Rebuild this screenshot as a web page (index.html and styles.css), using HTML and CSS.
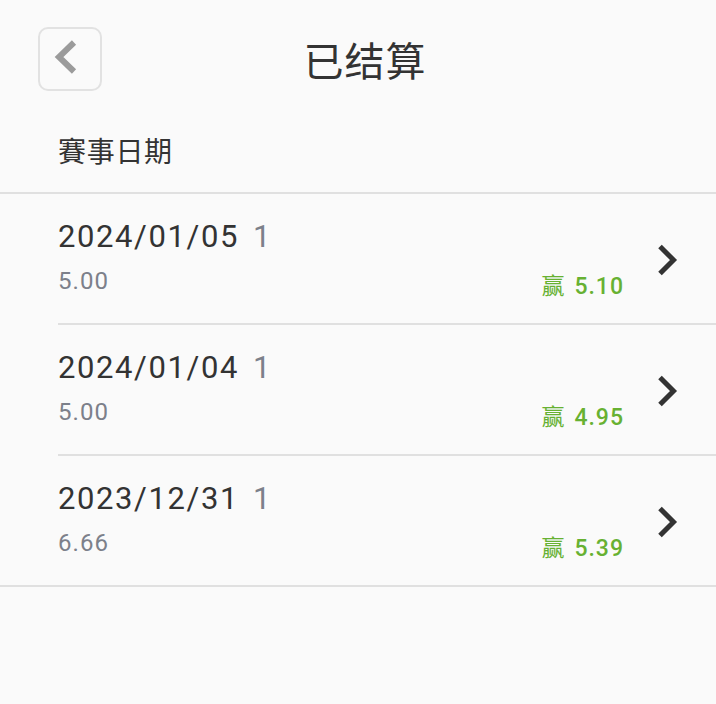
FILE: index.html
```html
<!DOCTYPE html>
<html lang="zh">
<head>
<meta charset="utf-8">
<title>已结算</title>
<link rel="stylesheet" href="styles.css">
</head>
<body>
<div class="page">
  <header class="topbar">
    <button class="back" aria-label="返回">
      <svg class="back-icon" width="30" height="40" viewBox="0 0 30 40"><polyline points="21,4.5 6,19 21,33.5" fill="none" stroke="#9b9b9b" stroke-width="6" stroke-linejoin="miter"/></svg>
    </button>
    <h1 class="title">已结算</h1>
    <span class="spacer"></span>
  </header>
  <div class="section-label">賽事日期</div>
  <ul class="list">
    <li class="row">
      <div class="info">
        <div class="date">2024/01/05<span class="count">1</span></div>
        <div class="stake">5.00</div>
      </div>
      <div class="result"><span class="win">赢</span>5.10</div>
      <svg class="arrow" width="22" height="34" viewBox="0 0 22 34"><polyline points="4,3.5 17.5,17 4,30.5" fill="none" stroke="#333" stroke-width="5"/></svg>
    </li>
    <li class="row">
      <div class="info">
        <div class="date">2024/01/04<span class="count">1</span></div>
        <div class="stake">5.00</div>
      </div>
      <div class="result"><span class="win">赢</span>4.95</div>
      <svg class="arrow" width="22" height="34" viewBox="0 0 22 34"><polyline points="4,3.5 17.5,17 4,30.5" fill="none" stroke="#333" stroke-width="5"/></svg>
    </li>
    <li class="row">
      <div class="info">
        <div class="date">2023/12/31<span class="count">1</span></div>
        <div class="stake">6.66</div>
      </div>
      <div class="result"><span class="win">赢</span>5.39</div>
      <svg class="arrow" width="22" height="34" viewBox="0 0 22 34"><polyline points="4,3.5 17.5,17 4,30.5" fill="none" stroke="#333" stroke-width="5"/></svg>
    </li>
  </ul>
</div>
</body>
</html>
```
FILE: styles.css
```css
* { box-sizing: border-box; }
html, body {
  margin: 0;
  background: #fafafa;
}
body {
  font-family: Roboto, "Noto Sans CJK SC", sans-serif;
  color: #333;
}
.topbar {
  display: grid;
  grid-template-columns: 64px 1fr 64px;
  align-items: center;
  height: 118px;
  padding: 0 38px;
}
.back {
  width: 64px;
  height: 64px;
  border: 2px solid #e2e2e2;
  border-radius: 10px;
  background: transparent;
  display: flex;
  align-items: center;
  justify-content: center;
  padding: 0;
}
.back-icon { display: block; margin: -2px 4px 0 0; }
.title {
  margin: 0;
  font-family: "Noto Sans CJK SC", sans-serif;
  font-size: 40px;
  font-weight: 400;
  line-height: 1;
  letter-spacing: 1px;
  text-align: center;
  padding-left: 14px;
  color: #333;
}
.section-label {
  height: 76px;
  display: flex;
  align-items: center;
  padding: 0 0 10px 58px;
  font-family: "Noto Sans CJK TC", "Noto Sans CJK SC", sans-serif;
  font-size: 28px;
  line-height: 1;
  letter-spacing: 0.7px;
  color: #333;
  border-bottom: 2px solid #e0e0e0;
}
.list {
  list-style: none;
  margin: 0;
  padding: 0 0 0 58px;
  border-bottom: 2px solid #e0e0e0;
}
.row {
  display: flex;
  align-items: stretch;
  height: 131px;
  border-bottom: 2px solid #e0e0e0;
}
.row:last-child { border-bottom: none; height: 129px; }
.info {
  flex: 1;
  padding-top: 25px;
}
.date {
  font-size: 31px;
  line-height: 36px;
  letter-spacing: 1.6px;
  color: #333;
}
.count {
  margin-left: 14px;
  color: #7c808a;
}
.stake {
  margin-top: 11px;
  font-size: 24px;
  line-height: 30px;
  letter-spacing: 1.1px;
  color: #7c808a;
}
.result {
  align-self: flex-end;
  margin: 0 32px 21px 0;
  font-size: 23px;
  line-height: 30px;
  font-weight: 500;
  letter-spacing: 1px;
  color: #67b132;
}
.win {
  font-family: "Noto Sans CJK SC", sans-serif;
  font-weight: 400;
  margin-right: 9px;
}
.arrow {
  align-self: center;
  margin: 3px 38px 0 0;
  display: block;
}
```
